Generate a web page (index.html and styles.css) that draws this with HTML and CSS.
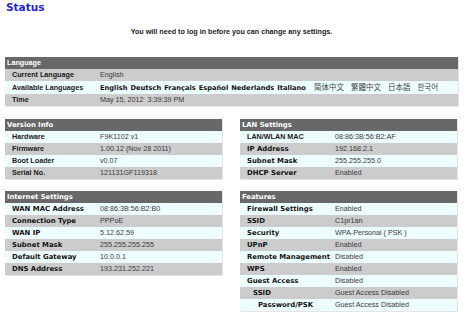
FILE: index.html
```html
<!DOCTYPE html>
<html lang="en">
<head>
    <meta charset="UTF-8">
    <meta name="viewport" content="width=device-width, initial-scale=1.0">
    <title>Status</title>
    <link rel="stylesheet" href="styles.css">
</head>

<body>
    <div class="page">
        <h1 class="title">Status</h1>
        <p class="notice">You will need to log in before you can change any settings.</p>

        <table class="info">
            <thead>
                <tr><th colspan="2" class="plain">Language</th></tr>
            </thead>
            <tbody>
                <tr class="grey"><td class="label arial">Current Language</td><td>English</td></tr>
                <tr class="cyan">
                    <td class="label arial">Available Languages</td>
                    <td class="langs">
                        <b>English</b> <b>Deutsch</b> <b>Français</b> <b>Español</b> <b>Nederlands</b> <b>Italiano</b>
                        <span class="cjk">简体中文</span> <span class="cjk">繁體中文</span> <span class="cjk">日本語</span> <span class="cjk">한국어</span>
                    </td>
                </tr>
                <tr class="grey"><td class="label arial">Time</td><td>May 15, 2012 &nbsp;3:39:39 PM</td></tr>
            </tbody>
        </table>

        <div class="cols">
            <div class="col">
                <table class="info">
                    <thead><tr><th colspan="2">Version Info</th></tr></thead>
                    <tbody>
                        <tr class="cyan"><td class="label arial">Hardware</td><td>F9K1102 v1</td></tr>
                        <tr class="grey"><td class="label arial">Firmware</td><td>1.00.12 (Nov 28 2011)</td></tr>
                        <tr class="cyan"><td class="label arial">Boot Loader</td><td>v0.07</td></tr>
                        <tr class="grey"><td class="label arial">Serial No.</td><td>121131GF119318</td></tr>
                    </tbody>
                </table>

                <table class="info">
                    <thead><tr><th colspan="2">Internet Settings</th></tr></thead>
                    <tbody>
                        <tr class="cyan"><td class="label">WAN MAC Address</td><td>08:86:3B:56:B2:B0</td></tr>
                        <tr class="grey"><td class="label">Connection Type</td><td>PPPoE</td></tr>
                        <tr class="cyan"><td class="label">WAN IP</td><td>5.12.62.59</td></tr>
                        <tr class="grey"><td class="label">Subnet Mask</td><td>255.255.255.255</td></tr>
                        <tr class="cyan"><td class="label">Default Gateway</td><td>10.0.0.1</td></tr>
                        <tr class="grey"><td class="label">DNS Address</td><td>193.231.252.221</td></tr>
                    </tbody>
                </table>
            </div>

            <div class="col">
                <table class="info">
                    <thead><tr><th colspan="2">LAN Settings</th></tr></thead>
                    <tbody>
                        <tr class="cyan"><td class="label arial">LAN/WLAN MAC</td><td>08:86:3B:56:B2:AF</td></tr>
                        <tr class="grey"><td class="label">IP Address</td><td>192.168.2.1</td></tr>
                        <tr class="cyan"><td class="label">Subnet Mask</td><td>255.255.255.0</td></tr>
                        <tr class="grey"><td class="label">DHCP Server</td><td>Enabled</td></tr>
                    </tbody>
                </table>

                <table class="info">
                    <thead><tr><th colspan="2">Features</th></tr></thead>
                    <tbody>
                        <tr class="cyan"><td class="label">Firewall Settings</td><td>Enabled</td></tr>
                        <tr class="grey"><td class="label">SSID</td><td>C1pr1an</td></tr>
                        <tr class="cyan"><td class="label">Security</td><td>WPA-Personal ( PSK )</td></tr>
                        <tr class="grey"><td class="label">UPnP</td><td>Enabled</td></tr>
                        <tr class="cyan"><td class="label">Remote Management</td><td>Disabled</td></tr>
                        <tr class="grey"><td class="label">WPS</td><td>Enabled</td></tr>
                        <tr class="cyan"><td class="label">Guest Access</td><td>Disabled</td></tr>
                        <tr class="grey"><td class="label sub">SSID</td><td>Guest Access Disabled</td></tr>
                        <tr class="cyan"><td class="label sub2">Password/PSK</td><td>Guest Access Disabled</td></tr>
                    </tbody>
                </table>
            </div>
        </div>
    </div>
</body>
</html>
```

FILE: styles.css
```css
body {
    margin: 0;
    padding: 0;
    background-color: #ffffff;
    font-family: "Liberation Sans", Arial, sans-serif;
}

.page {
    width: 453px;
    padding: 0 5px;
}

.title {
    margin: 0;
    padding: 1px 0 0 1px;
    height: 14px;
    font-family: "DejaVu Sans", Verdana, sans-serif;
    font-size: 10.5px;
    font-weight: bold;
    line-height: 12px;
    color: #2323d8;
}

.notice {
    margin: 0;
    padding: 12px 0 0 0;
    height: 30px;
    text-align: center;
    font-size: 7.2px;
    font-weight: bold;
    line-height: 10px;
    color: #222222;
}

table.info {
    width: 100%;
    border-collapse: collapse;
    border-spacing: 0;
    margin-bottom: 13px;
    box-shadow: 1px 1px 0 #e4e4e4;
}

table.info th {
    height: 12px;
    padding: 0 0 0 2px;
    text-align: left;
    background-color: #686868;
    color: #ffffff;
    font-family: "DejaVu Sans", Verdana, sans-serif;
    font-size: 6.8px;
    font-weight: bold;
    line-height: 12px;
}

table.info th.plain {
    font-family: "Liberation Sans", Arial, sans-serif;
    font-size: 7.2px;
}

table.info td {
    height: 12px;
    padding: 0;
    font-size: 7.2px;
    line-height: 12px;
    color: #3a3a3a;
    white-space: nowrap;
}

table.info td.label {
    width: 88px;
    padding-left: 7px;
    font-family: "DejaVu Sans", Verdana, sans-serif;
    font-size: 6.9px;
    font-weight: bold;
    color: #111111;
}

table.info td.label.arial {
    font-family: "Liberation Sans", Arial, sans-serif;
    font-size: 7.2px;
    color: #1a1a1a;
}

table.info td.sub {
    padding-left: 13px;
    width: 82px;
}

table.info td.sub2 {
    padding-left: 18px;
    width: 77px;
}

tr.grey td {
    background-color: #cccccc;
}

tr.cyan td {
    background-color: #edfdfd;
}

.langs b {
    font-family: "DejaVu Sans", Verdana, sans-serif;
    font-size: 6.7px;
    color: #111111;
    margin-right: 1px;
}

.langs .cjk {
    font-family: "Noto Sans CJK SC", "Noto Sans CJK KR", sans-serif;
    font-size: 7.5px;
    color: #444444;
    margin-left: 5px;
}

.cols {
    display: flex;
    gap: 18px;
}

.col {
    width: 217px;
}

.col table.info {
    margin-bottom: 12px;
}
```
